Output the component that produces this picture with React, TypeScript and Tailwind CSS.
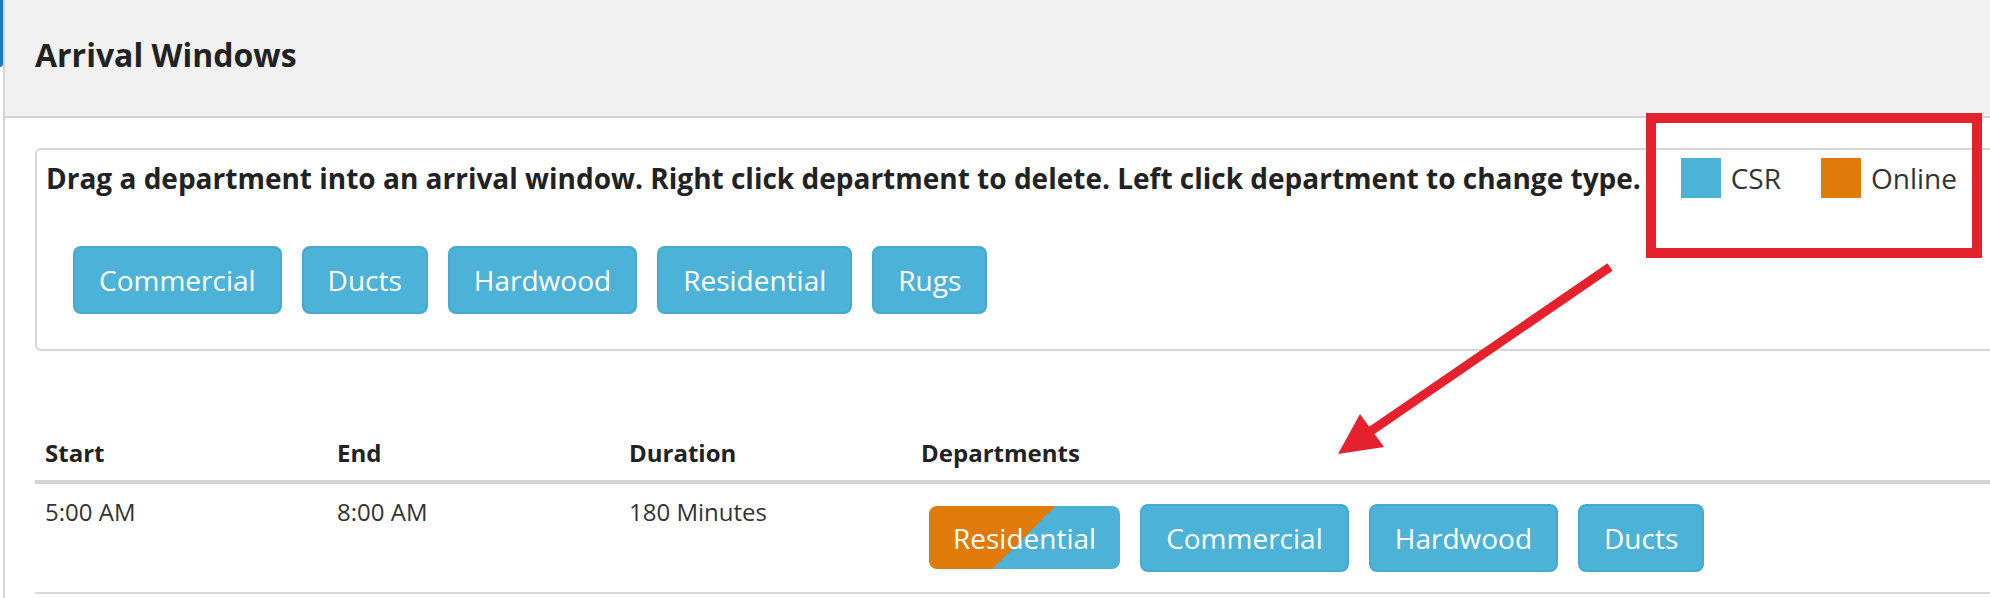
import React from "react";

const BLUE = "bg-[#4db2d7]";

function DeptButton({ label }: { label: string }) {
  return (
    <div
      className={`h-[68px] shrink-0 rounded-[8px] border-2 border-[#45aad1] ${BLUE} px-[24px] py-[12px] text-[28px] leading-[40px] text-white`}
    >
      {label}
    </div>
  );
}

function MixedButton({ label }: { label: string }) {
  return (
    <div className="mt-[2px] h-[63px] shrink-0 rounded-[8px] bg-[linear-gradient(135deg,#e07b0a_50%,#4db2d7_50%)] px-[24px] pt-[12px] text-[28px] leading-[40px] text-white">
      {label}
    </div>
  );
}

function LegendItem({ color, label }: { color: string; label: string }) {
  return (
    <div className="flex items-center gap-[10px]">
      <div className={`h-[40px] w-[40px] ${color}`} />
      <span className="text-[28px] leading-[40px] text-[#333]">{label}</span>
    </div>
  );
}

export default function App() {
  const pool = ["Commercial", "Ducts", "Hardwood", "Residential", "Rugs"];
  return (
    <div className="relative h-[598px] w-[1990px] overflow-hidden bg-white font-['Open_Sans',sans-serif] text-[#262626]">
      <div className="flex h-full">
        {/* active section marker */}
        <div className="w-[3px] shrink-0">
          <div className="h-[67px] w-[3px] rounded-br-[3px] bg-[#1b7dc0]" />
        </div>

        <div className="min-w-0 flex-1 border-l-2 border-[#d4d4d4]">
          <header className="h-[118px] border-b-2 border-[#d3d3d3] bg-[#f1f1f1] pl-[30px] pt-[33px]">
            <h2 className="text-[32px] font-bold leading-[44px] text-[#222]">Arrival Windows</h2>
          </header>

          <div className="w-[2030px] pl-[30px]">
            {/* department pool */}
            <div className="mt-[30px] rounded-[6px] border-2 border-[#d6d6d6] pb-[35px] pl-[9px] pr-[76px] pt-[8px]">
              <div className="flex h-[40px] items-center">
                <p className="text-[28px] font-bold leading-[40px] text-[#222]">
                  Drag a department into an arrival window. Right click department to delete. Left click department to change type.
                </p>
                <div className="ml-auto flex items-center gap-[40px]">
                  <LegendItem color="bg-[#4db2d7]" label="CSR" />
                  <LegendItem color="bg-[#e07b0a]" label="Online" />
                </div>
              </div>
              <div className="ml-[27px] mt-[48px] flex gap-[20px]">
                {pool.map((d) => (
                  <DeptButton key={d} label={d} />
                ))}
              </div>
            </div>

            {/* arrival windows table */}
            <div className="mt-[75px]">
              <div className="flex border-b-4 border-[#d4d4d4] text-[24px] font-bold leading-[34px] text-[#222]">
                <div className="w-[292px] px-[10px] py-[10px]">Start</div>
                <div className="w-[292px] px-[10px] py-[10px]">End</div>
                <div className="w-[292px] px-[10px] py-[10px]">Duration</div>
                <div className="flex-1 px-[10px] py-[10px]">Departments</div>
              </div>
              <div className="flex border-b-2 border-[#d9d9d9] text-[24px] leading-[34px] text-[#333]">
                <div className="w-[292px] px-[10px] pt-[11px]">5:00 AM</div>
                <div className="w-[292px] px-[10px] pt-[11px]">8:00 AM</div>
                <div className="w-[292px] px-[10px] pt-[11px]">180 Minutes</div>
                <div className="flex flex-1 items-start gap-[20px] py-[20px] pl-[18px]">
                  <MixedButton label="Residential" />
                  <DeptButton label="Commercial" />
                  <DeptButton label="Hardwood" />
                  <DeptButton label="Ducts" />
                </div>
              </div>
            </div>
          </div>
        </div>
      </div>

      {/* annotation: highlight box and arrow */}
      <svg
        className="pointer-events-none absolute left-0 top-0"
        width="1990"
        height="598"
        viewBox="0 0 1990 598"
      >
        <rect x="1651" y="118" width="326" height="135" fill="none" stroke="#e5212d" strokeWidth="10" />
        <line x1="1610" y1="267" x2="1368" y2="433" stroke="#e5212d" strokeWidth="9" />
        <polygon points="1338,454 1360,414 1384,447" fill="#e5212d" />
      </svg>
    </div>
  );
}
